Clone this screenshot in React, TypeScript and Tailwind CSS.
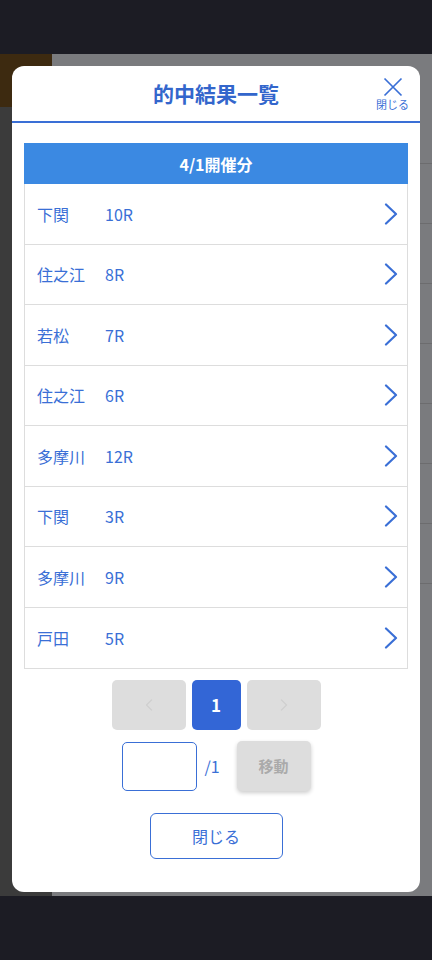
import { ChevronLeft, ChevronRight } from 'lucide-react';

const races = [
  { place: '下関', race: '10R' },
  { place: '住之江', race: '8R' },
  { place: '若松', race: '7R' },
  { place: '住之江', race: '6R' },
  { place: '多摩川', race: '12R' },
  { place: '下関', race: '3R' },
  { place: '多摩川', race: '9R' },
  { place: '戸田', race: '5R' },
];

function Arrow() {
  return (
    <svg width="14" height="22" viewBox="0 0 14 22" fill="none" className="text-[#3a6fd6]">
      <polyline points="2,1.5 12,11 2,20.5" stroke="currentColor" strokeWidth="2.2" strokeLinecap="round" strokeLinejoin="round" />
    </svg>
  );
}

function RaceRow({ place, race }: { place: string; race: string }) {
  return (
    <div className="flex h-[60.5px] items-center border-b border-[#dddddd] pl-[12px] pr-[9px] text-[16px] text-[#3a6fd6] last:border-b-0">
      <span className="w-[68px]">{place}</span>
      <span className="flex-1">{race}</span>
      <Arrow />
    </div>
  );
}

export default function App() {
  return (
    <div
      className="relative h-[960px] w-[432px] overflow-hidden bg-[#1c1c24]"
      style={{ fontFamily: '"Noto Sans CJK JP", "Noto Sans", sans-serif' }}
    >
      {/* dimmed page behind the dialog */}
      <div className="absolute left-0 right-0 top-[54px] h-[842px] bg-[#7a7b7e]">
        <div className="flex h-full">
          <div className="w-[52px] bg-[#3b3b3b]">
            <div className="h-[53px] bg-[#3d2a10]" />
          </div>
          <div className="flex flex-1 flex-col">
            <div className="h-[110px] border-b border-[#6c6c6e]" />
            <div className="h-[60px] border-b border-[#6c6c6e]" />
            <div className="h-[60px] border-b border-[#6c6c6e]" />
            <div className="h-[60px] border-b border-[#6c6c6e]" />
            <div className="h-[60px] border-b border-[#6c6c6e]" />
            <div className="h-[60px] border-b border-[#6c6c6e]" />
            <div className="h-[60px] border-b border-[#6c6c6e]" />
            <div className="h-[60px] border-b border-[#6c6c6e]" />
          </div>
        </div>
      </div>

      {/* dialog */}
      <div className="absolute left-[12px] top-[66px] flex h-[826px] w-[408px] flex-col rounded-[12px] bg-white">
        <div className="relative flex h-[57px] items-center justify-center border-b-2 border-[#3a6fd6]">
          <h1 className="text-[21px] font-bold text-[#3366cc]">的中結果一覧</h1>
          <button className="absolute right-[11px] top-[11px] flex flex-col items-center text-[#3a6fd6]">
            <svg width="20" height="20" viewBox="0 0 20 20" fill="none">
              <path d="M1.5 1.5 L18.5 18.5 M18.5 1.5 L1.5 18.5" stroke="currentColor" strokeWidth="1.7" />
            </svg>
            <span className="mt-[2px] text-[11px] leading-none">閉じる</span>
          </button>
        </div>

        <div className="mx-[12px] mt-[20px]">
          <div className="flex h-[41px] items-center justify-center bg-[#3b89e2] text-[16px] font-bold text-white">
            4/1開催分
          </div>
          <div className="border border-t-0 border-[#dddddd]">
            {races.map((r, i) => (
              <RaceRow key={i} place={r.place} race={r.race} />
            ))}
          </div>
        </div>

        <div className="mt-[11px] flex justify-center gap-[6px]">
          <button className="flex h-[50px] w-[74px] items-center justify-center rounded-[5px] bg-[#dddddd] text-[#cfcfcf]">
            <ChevronLeft size={20} strokeWidth={1.5} />
          </button>
          <button className="flex h-[50px] w-[49px] items-center justify-center rounded-[5px] bg-[#3366d6] text-[17px] font-bold text-white">
            1
          </button>
          <button className="flex h-[50px] w-[74px] items-center justify-center rounded-[5px] bg-[#dddddd] text-[#cfcfcf]">
            <ChevronRight size={20} strokeWidth={1.5} />
          </button>
        </div>

        <div className="mt-[11px] flex items-center justify-center">
          <div className="h-[49px] w-[75px] rounded-[5px] border border-[#3a6fd6]" />
          <span className="ml-[8px] w-[32px] text-[16px] text-[#3a6fd6]">/1</span>
          <button className="h-[50px] w-[74px] rounded-[5px] bg-[#dddddd] text-[15px] font-bold text-[#aaaaaa] shadow-[0_2px_4px_rgba(0,0,0,0.2)]">
            移動
          </button>
        </div>

        <div className="mt-[22px] flex justify-center">
          <button className="h-[46px] w-[133px] rounded-[6px] border border-[#3a6fd6] text-[16px] text-[#3a6fd6]">
            閉じる
          </button>
        </div>
      </div>
    </div>
  );
}
